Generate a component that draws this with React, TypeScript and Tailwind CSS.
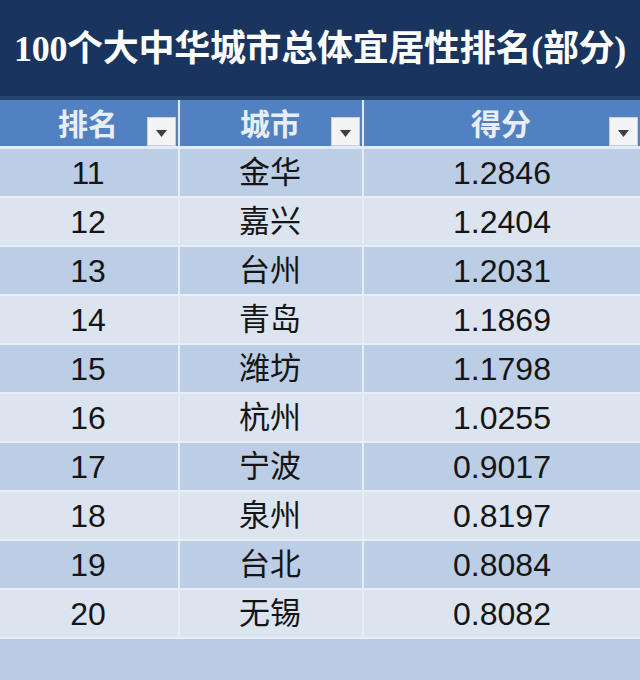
const ROWS: [number, string, string][] = [
  [11, '金华', '1.2846'],
  [12, '嘉兴', '1.2404'],
  [13, '台州', '1.2031'],
  [14, '青岛', '1.1869'],
  [15, '潍坊', '1.1798'],
  [16, '杭州', '1.0255'],
  [17, '宁波', '0.9017'],
  [18, '泉州', '0.8197'],
  [19, '台北', '0.8084'],
  [20, '无锡', '0.8082'],
];

const cjk = "font-['Liberation_Sans','Noto_Sans_CJK_SC',sans-serif]";

function FilterButton() {
  return (
    <div className="absolute right-[2px] bottom-0 w-[29px] h-[29px] bg-[#f3f4f6] border border-[#c9cfd8] flex items-center justify-center">
      <svg width="11" height="7" viewBox="0 0 11 7" className="mt-[3px]">
        <path d="M0 0 H11 L5.5 7 Z" fill="#3f3f3f" />
      </svg>
    </div>
  );
}

export default function App() {
  return (
    <div className={`w-[640px] h-[680px] bg-[#b9cbe5] overflow-hidden ${cjk}`}>
      {/* Title */}
      <div className="h-[96px] bg-[#19345e] flex items-center justify-center pt-[2px]">
        <h1 className="text-white text-[36px] font-bold leading-none tracking-[-0.3px] font-['Liberation_Serif','Noto_Sans_CJK_SC',serif]">
          100个大中华城市总体宜居性排名(部分)
        </h1>
      </div>
      <div className="h-[4px] bg-[#24456f]" />

      {/* Header */}
      <div className="grid grid-cols-[180px_184px_1fr] h-[49px] bg-[#5181c1] border-b-[3px] border-[#e4ebf5]">
        {['排名', '城市', '得分'].map((h, i) => (
          <div
            key={h}
            className={`relative flex items-center justify-center pt-[4px] pr-[2px] ${i < 2 ? 'border-r-2 border-[#e4ebf5]' : 'pr-0'}`}
          >
            <span className="text-[30px] font-bold leading-none text-[#e8eef7]">{h}</span>
            <FilterButton />
          </div>
        ))}
      </div>

      {/* Rows */}
      {ROWS.map(([rank, city, score], i) => (
        <div
          key={rank}
          className={`grid grid-cols-[180px_184px_1fr] h-[49px] border-b-2 border-[#e9eef6] text-[#151515] ${
            i % 2 === 0 ? 'bg-[#bccde6]' : 'bg-[#dce4f0]'
          }`}
        >
          <div className="flex items-center justify-center pr-[2px] border-r-2 border-[#e9eef6] text-[32px] leading-none">
            {rank}
          </div>
          <div className="flex items-center justify-center pr-[2px] border-r-2 border-[#e9eef6] text-[31px] leading-none">
            {city}
          </div>
          <div className="flex items-center justify-center text-[32px] leading-none">
            {score}
          </div>
        </div>
      ))}
    </div>
  );
}
